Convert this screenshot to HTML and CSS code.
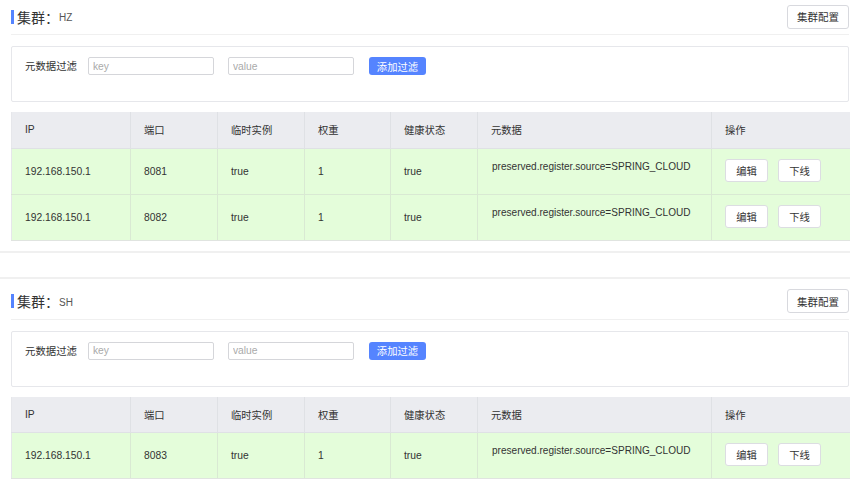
FILE: index.html
```html
<!DOCTYPE html>
<html lang="zh">
<head>
<meta charset="utf-8">
<link rel="stylesheet" href="styles.css">
</head>
<body>
<div class="page">
  <section class="card">
    <div class="card-head">
      <div class="title"><span class="bar"></span><span class="title-main">集群：</span><span class="title-name">HZ</span></div>
      <button class="btn btn-config">集群配置</button>
    </div>
    <div class="filter">
      <span class="filter-label">元数据过滤</span>
      <input class="inp" placeholder="key">
      <input class="inp" placeholder="value">
      <button class="btn-primary">添加过滤</button>
    </div>
    <table class="tbl">
      <colgroup><col class="c1"><col class="c2"><col class="c3"><col class="c4"><col class="c5"><col class="c6"><col class="c7"></colgroup>
      <thead><tr><th>IP</th><th>端口</th><th>临时实例</th><th>权重</th><th>健康状态</th><th>元数据</th><th>操作</th></tr></thead>
      <tbody>
        <tr><td>192.168.150.1</td><td>8081</td><td>true</td><td>1</td><td>true</td><td class="meta">preserved.register.source=SPRING_CLOUD</td><td class="ops"><button class="btn btn-op">编辑</button><button class="btn btn-op">下线</button></td></tr>
        <tr><td>192.168.150.1</td><td>8082</td><td>true</td><td>1</td><td>true</td><td class="meta">preserved.register.source=SPRING_CLOUD</td><td class="ops"><button class="btn btn-op">编辑</button><button class="btn btn-op">下线</button></td></tr>
      </tbody>
    </table>
  </section>
  <section class="card">
    <div class="card-head">
      <div class="title"><span class="bar"></span><span class="title-main">集群：</span><span class="title-name">SH</span></div>
      <button class="btn btn-config">集群配置</button>
    </div>
    <div class="filter">
      <span class="filter-label">元数据过滤</span>
      <input class="inp" placeholder="key">
      <input class="inp" placeholder="value">
      <button class="btn-primary">添加过滤</button>
    </div>
    <table class="tbl">
      <colgroup><col class="c1"><col class="c2"><col class="c3"><col class="c4"><col class="c5"><col class="c6"><col class="c7"></colgroup>
      <thead><tr><th>IP</th><th>端口</th><th>临时实例</th><th>权重</th><th>健康状态</th><th>元数据</th><th>操作</th></tr></thead>
      <tbody>
        <tr><td>192.168.150.1</td><td>8083</td><td>true</td><td>1</td><td>true</td><td class="meta">preserved.register.source=SPRING_CLOUD</td><td class="ops"><button class="btn btn-op">编辑</button><button class="btn btn-op">下线</button></td></tr>
      </tbody>
    </table>
  </section>
</div>
</body>
</html>
```

FILE: styles.css
```css
* { box-sizing: border-box; }
html, body { margin: 0; padding: 0; background: #fff; }
body {
  font-family: "Liberation Sans", "Noto Sans CJK SC", sans-serif;
  color: #333;
  font-size: 10.3px;
  overflow: hidden;
}
.page { margin-top: -8px; }
.card {
  border-top: 2px solid #f0f0f0;
  border-bottom: 2px solid #f0f0f0;
  padding: 6px 1px 10px 11px;
  margin-bottom: 24px;
}
.card-head {
  height: 35px;
  display: flex;
  align-items: center;
  justify-content: space-between;
  border-bottom: 1px solid #f0f0f0;
  padding-bottom: 1px;
}
.title { display: flex; align-items: center; }
.bar { width: 3px; height: 14px; background: #5584ff; margin-right: 3px; }
.title-main { font-family: "Noto Sans CJK SC", sans-serif; font-size: 14px; color: #333; }
.title-name { font-size: 10px; color: #555; padding-top: 2px; }
.btn {
  font-family: "Noto Sans CJK SC", sans-serif;
  background: #fff;
  border: 1px solid #d8d9de;
  border-radius: 3px;
  color: #333;
  cursor: pointer;
  padding: 0;
}
.btn-config { width: 62px; height: 24px; font-size: 10.5px; }
.filter {
  margin-top: 11px;
  height: 56px;
  border: 1px solid #e6e7eb;
  border-radius: 2px;
  display: flex;
  align-items: flex-start;
  padding: 10px 0 0 13px;
}
.filter-label {
  font-family: "Noto Sans CJK SC", sans-serif;
  font-size: 10.4px;
  line-height: 18px;
  margin-right: 11px;
}
.inp {
  width: 126px;
  height: 18px;
  border: 1px solid #d5d6da;
  border-radius: 2px;
  padding: 0 4px;
  font-family: "Liberation Sans", sans-serif;
  font-size: 10.3px;
  margin-right: 14px;
  outline: none;
}
.inp::placeholder { color: #aaa; }
.btn-primary {
  width: 57px;
  height: 18px;
  border: none;
  border-radius: 3px;
  background: #5584ff;
  color: #fff;
  font-family: "Noto Sans CJK SC", sans-serif;
  font-size: 10.3px;
  padding: 0;
  margin-left: 1px;
}
.tbl {
  margin-top: 10px;
  width: 838px;
  border-collapse: collapse;
  table-layout: fixed;
}
.c1 { width: 119px; } .c2 { width: 87px; } .c3 { width: 87px; } .c4 { width: 86px; }
.c5 { width: 87px; } .c6 { width: 234px; } .c7 { width: 138px; }
.tbl th {
  height: 36px;
  background: #ebecf0;
  font-weight: normal;
  text-align: left;
  padding: 0 0 0 13px;
  border: 1px solid #dfe1e5;
  border-top: none;
  color: #333;
  font-family: "Liberation Sans", "Noto Sans CJK SC", sans-serif;
  font-size: 10.3px;
}
.tbl td {
  height: 46px;
  background: #e4fdda;
  padding: 0 0 0 13px;
  border: 1px solid #d9e9d3;
  color: #333;
  white-space: nowrap;
}
.tbl tr > :first-child { border-left: 1px solid #e6e7eb; }
.tbl tr > :last-child { border-right: none; }
.tbl tbody tr:last-child td { border-bottom: 1px solid #e0e4e0; }
.tbl td.meta { padding-bottom: 10px; padding-left: 14px; font-size: 10.05px; }
.tbl td.ops { padding-bottom: 2px; }
.btn-op {
  width: 43px;
  height: 23px;
  font-size: 10.3px;
  margin-right: 10px;
  border-color: #dcdde2;
}
```
